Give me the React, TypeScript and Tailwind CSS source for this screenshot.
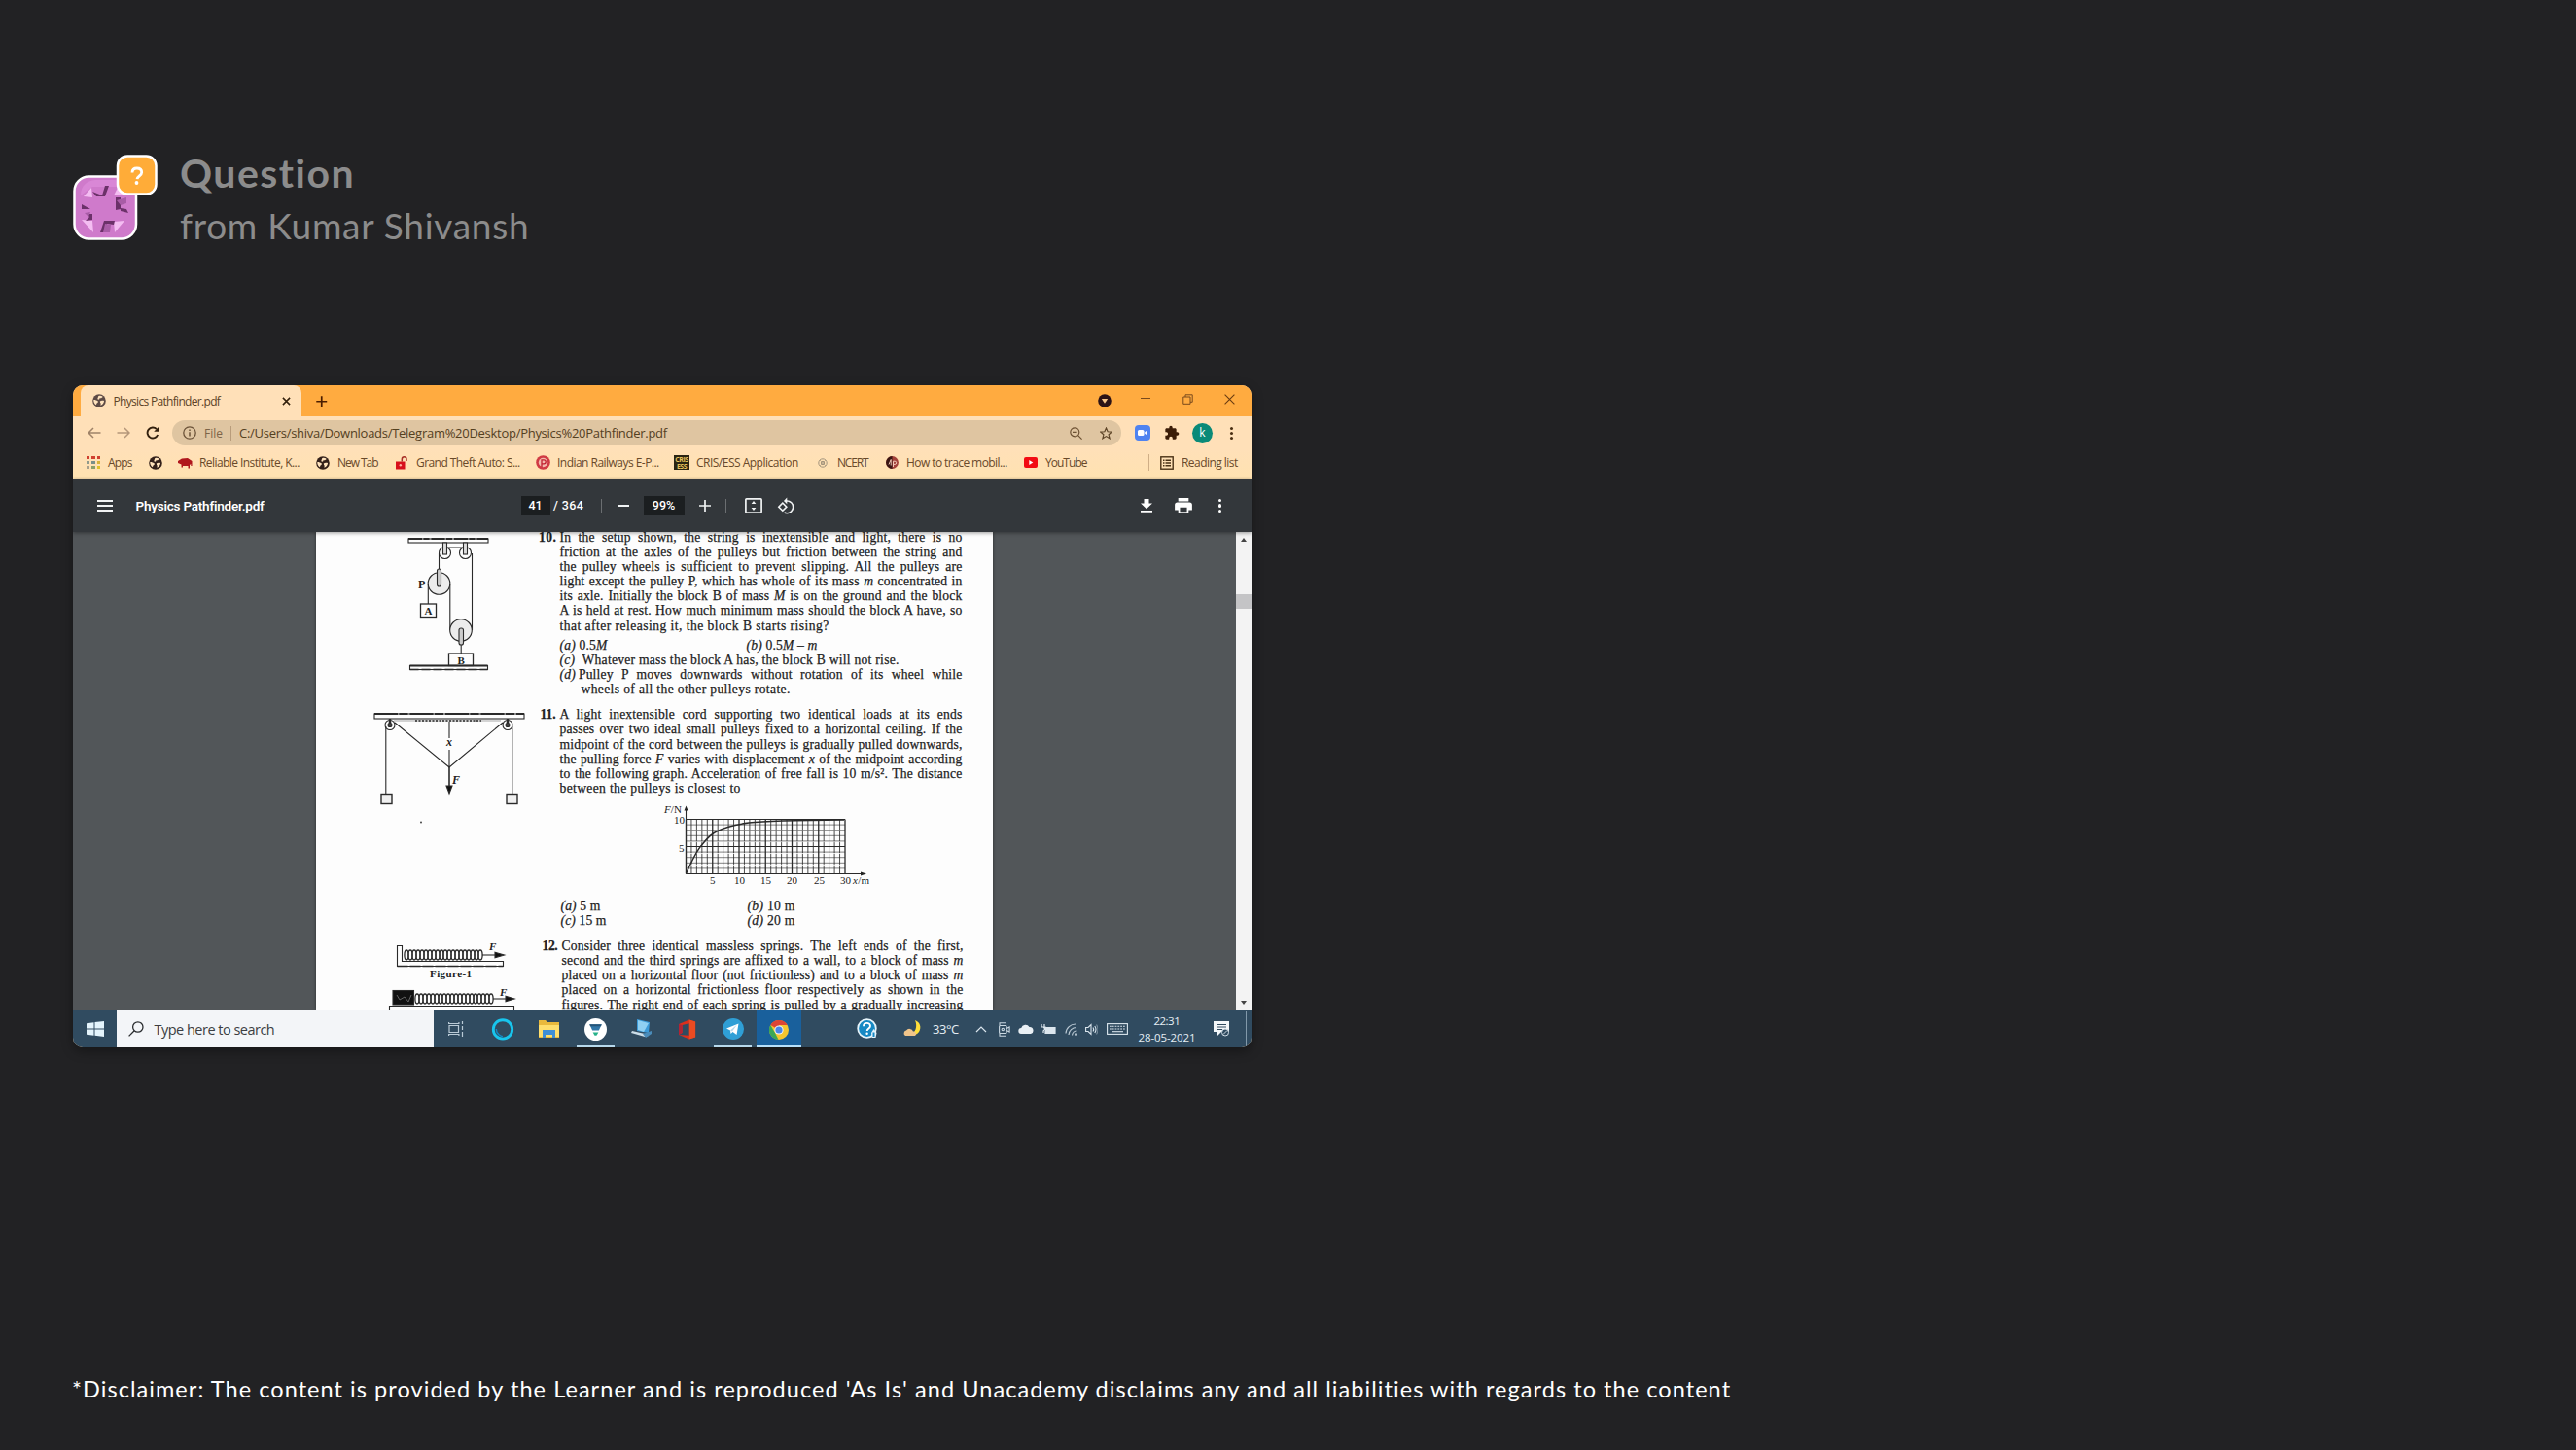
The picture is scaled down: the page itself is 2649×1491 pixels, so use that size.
import React, { useLayoutEffect, useRef } from "react";

/** One line of text whose tracking is set so that it fills the width of its box. */
function Fit({ className, children }: { className: string; children: React.ReactNode }) {
  const box = useRef<HTMLDivElement>(null);
  const line = useRef<HTMLSpanElement>(null);
  useLayoutEffect(() => {
    const b = box.current;
    const l = line.current;
    if (!b || !l) return;
    l.style.letterSpacing = "0px";
    const count = (l.textContent || "").length;
    const natural = l.getBoundingClientRect().width;
    l.style.letterSpacing = `${(b.clientWidth - natural) / Math.max(1, count - 0.5)}px`;
  }, []);
  return (
    <div ref={box} className={"shrink-0 whitespace-nowrap " + className}>
      <span ref={line} className="inline-block whitespace-pre">
        {children}
      </span>
    </div>
  );
}

/** A printed line stretched between both margins. */
function Line({ children }: { children: React.ReactNode }) {
  return <div className="h-[15.2px] w-full whitespace-nowrap tracking-[0.18px] [text-align-last:justify]">{children}</div>;
}

function Globe({ className, fill }: { className: string; fill: string }) {
  return (
    <svg viewBox="0 0 14 14" className={"size-[14px] shrink-0 " + className}>
      <circle cx="7" cy="7" r="6.8" fill={fill} />
      <path d="M1.300 6c1.500-.2 3 .5 4.200 1.300.9.700.3 1.600-.5 1.900-.9.300-.6 1.500-1.300 2C2.100 10 1.100 8 1.300 6zM6.200 2.200c1.500-.8 3.300-.3 4.600.8L9 4.300l-1.500-.1-.5 1.600-1.800-.5zM7.800 7.400c1.500-.9 3-.6 4.300-.3-.2 2.300-1.600 4-3.600 4.700-.2-1.200.7-2.200-.4-2.900z" fill="#ffe3bd" />
    </svg>
  );
}

function BrandMark() {
  return (
    <svg viewBox="0 0 88 90" className="h-[90px] w-[88px] shrink-0">
      <rect x="1.500" y="22.500" width="63.500" height="64" rx="15" fill="#cf7acb" stroke="#fff" strokeWidth="2.500" />
      <path d="M8 42c0-10 6-15 15-16h20c8 1 15 7 16 15l-12-8H20z" fill="#d987d6" />
      <path d="M19 34l1 10-9-1zM46 34l-4 8 12 0zM9 67l11 1 1 12zM53 68l-11 1 1 11z" fill="#f4bdf2" />
      <path d="M20 38l10 4 3-10h4l-4 11H24zM44 44h5l0 12-5 1zM49 55l6 1 2 4-8-2zM9 51l9 5-9 0zM14 61h6l0 6-7 1 4-4zM32 68l11 0-1 4-7-1-3 9h-4z" fill="#6b3169" />
      <path d="M33 71l6 1-1 8-7 0zM12 60l6-1-2 5zM45 47l10-3v6l-6 2z" fill="#a85ca6" />
      <rect x="46" y="1.500" width="39.500" height="39" rx="10" fill="#ffac38" stroke="#fff" strokeWidth="2.500" />
      <path d="M61 18.500c0-3 2-4.500 4.800-4.500 3 0 4.900 1.700 4.900 4.200 0 3.500-4.300 3.600-4.700 7" fill="none" stroke="#fff" strokeWidth="2.800" />
      <circle cx="65.500" cy="29" r="1.900" fill="#fff" />
    </svg>
  );
}

function TabStrip() {
  return (
    <div className="flex h-8 w-full bg-[#ffab40]">
      <div className="ml-2 flex h-8 w-[227px] items-center rounded-t-[8px] bg-[#ffe0b8]">
        <Globe className="ml-3" fill="#5d4a45" />
        <Fit className="ml-[7.500px] w-[110px] pt-px text-[12px] leading-4 text-[#5c4327]">Physics Pathfinder.pdf</Fit>
        <svg viewBox="0 0 10 10" className="ml-[63px] size-[9px] shrink-0" stroke="#33200c" strokeWidth="1.700">
          <path d="M1 1l8 8M9 1l-8 8" />
        </svg>
      </div>
      <svg viewBox="0 0 12 12" className="ml-[15px] mt-[10.500px] size-[11.500px] shrink-0" stroke="#4a1d00" strokeWidth="1.800">
        <path d="M6 .3v11.400M.3 6h11.400" />
      </svg>
      <div className="ml-auto flex h-8 w-[158px] items-start">
        <svg viewBox="0 0 14 14" className="mt-[9px] size-[14px]">
          <circle cx="7" cy="7" r="6.800" fill="#2b1216" />
          <path d="M3.800 5h6.400L7 9.800z" fill="#f5c58a" />
        </svg>
        <div className="ml-[30px] mt-[13px] h-px w-[10px] bg-[#7a4a1c]" />
        <svg viewBox="0 0 11 11" className="ml-[33px] mt-[8.500px] size-[11px]" fill="none" stroke="#7a4a1c">
          <path d="M.8 3h7.200v7.300H.8zM3 3V.8h7.200v7.500H8" />
        </svg>
        <svg viewBox="0 0 11 11" className="ml-[32px] mt-[8.500px] size-[11px]" stroke="#6b3d12" strokeWidth="1.100">
          <path d="M.6.6l9.800 9.800M10.400.6L.6 10.400" />
        </svg>
      </div>
    </div>
  );
}

function AddressRow() {
  return (
    <div className="flex h-[34px] w-full items-center">
      <svg viewBox="0 0 14 12" className="ml-[15px] h-[12px] w-[14px]" fill="none" stroke="#9f8368" strokeWidth="1.500">
        <path d="M13.500 6H1M6 1L1 6l5 5" />
      </svg>
      <svg viewBox="0 0 14 12" className="ml-[16px] h-[12px] w-[14px]" fill="none" stroke="#b5977a" strokeWidth="1.500">
        <path d="M.5 6H13M8 1l5 5-5 5" />
      </svg>
      <svg viewBox="0 0 14 14" className="ml-[16px] size-[14px]" fill="none" stroke="#33200e" strokeWidth="1.900">
        <path d="M12.200 9A5.500 5.500 0 1 1 11 3.100" />
        <path d="M13.500.4v5.300H8.200z" fill="#33200e" stroke="none" />
      </svg>
      <div className="ml-[13px] flex h-[26px] w-[976px] items-center rounded-full bg-[#dfc5a1]">
        <svg viewBox="0 0 14 14" className="ml-[11px] size-[14px]" fill="none" stroke="#6b5238" strokeWidth="1.300">
          <circle cx="7" cy="7" r="6.200" />
          <path d="M7 6.200v4.200M7 3.400v1.500" strokeWidth="1.500" />
        </svg>
        <Fit className="ml-[8px] w-[19px] pt-px text-[12px] text-[#7d6448]">File</Fit>
        <div className="ml-[8px] h-[15px] w-px bg-[#b89c7b]" />
        <Fit className="ml-[8px] w-[440px] pt-px text-[13px] text-[#54401f]">
          C:/Users/shiva/Downloads/Telegram%20Desktop/Physics%20Pathfinder.pdf
        </Fit>
        <svg viewBox="0 0 13 13" className="ml-auto size-[13px]" fill="none" stroke="#6e5234" strokeWidth="1.200">
          <circle cx="5.300" cy="5.300" r="4.500" />
          <path d="M8.600 8.600l4 4M3 5.300h4.600" />
        </svg>
        <svg viewBox="0 0 13 13" className="ml-[18px] mr-[9px] size-[13px]" fill="none" stroke="#5f4628" strokeWidth="1.200">
          <path d="M6.500 1l1.600 3.800 4.100.3-3.100 2.700 1 4-3.600-2.200-3.600 2.200 1-4L.8 5.100l4.100-.3z" />
        </svg>
      </div>
      <svg viewBox="0 0 16 16" className="ml-[14px] size-[16px]">
        <rect width="16" height="16" rx="4" fill="#4f83f0" />
        <rect x="3" y="5" width="6.500" height="6" rx="1.500" fill="#fff" />
        <path d="M10.200 7.200L13 5.300v5.400l-2.800-1.900z" fill="#fff" />
      </svg>
      <svg viewBox="0 0 24 24" className="ml-[14px] size-[16px]" fill="#3b1d08">
        <path d="M20.500 11H19V7c0-1.100-.9-2-2-2h-4V3.500a2.500 2.500 0 0 0-5 0V5H4c-1.100 0-2 .9-2 2v3.800h1.500a2.700 2.700 0 0 1 0 5.400H2V20c0 1.100.9 2 2 2h3.800v-1.500a2.700 2.700 0 0 1 5.400 0V22H17c1.100 0 2-.9 2-2v-4h1.500a2.500 2.500 0 0 0 0-5z" />
      </svg>
      <div className="ml-[13px] flex size-[21px] items-center justify-center rounded-full bg-[#0a8a78] text-[12px] leading-none text-white">k</div>
      <div className="ml-[17.500px] flex flex-col gap-[2px]">
        <div className="size-[3px] rounded-full bg-[#4a2e12]" />
        <div className="size-[3px] rounded-full bg-[#4a2e12]" />
        <div className="size-[3px] rounded-full bg-[#4a2e12]" />
      </div>
    </div>
  );
}

const appDots = ["#d0402f", "#d0402f", "#d0402f", "#8f9a8c", "#7a8f8a", "#d9b23a", "#a8a08c", "#8c9f6a", "#e0c22a"];

function Bookmarks() {
  return (
    <div className="flex h-[31px] w-full items-center bg-gradient-to-b from-[#ffe0b8] to-[#ffe2b0] pb-[3.500px] text-[12px] text-[#69492a]">
      <div className="ml-[14px] grid w-[14px] grid-cols-3 gap-[2px]">
        {appDots.map((c, i) => (
          <div key={i} className="h-[3px] w-[3.300px]" style={{ backgroundColor: c }} />
        ))}
      </div>
      <Fit className="ml-[8px] w-[25px]">Apps</Fit>
      <Globe className="ml-[17px]" fill="#33201a" />
      <svg viewBox="0 0 15 12" className="ml-[16px] h-[12px] w-[15px] shrink-0" fill="#b0171d">
        <path d="M0 4L4 1.500 10 1l4.500 3v5h-1.200V7L12 8v3.500h-1.500V9H5v1.500H3.500V7.500L0 6z" />
      </svg>
      <Fit className="ml-[7px] w-[103px]">Reliable Institute, K...</Fit>
      <Globe className="ml-[17px]" fill="#33201a" />
      <Fit className="ml-[8px] w-[42px]">New Tab</Fit>
      <svg viewBox="0 0 13 14" className="ml-[18px] h-[14px] w-[13px] shrink-0">
        <rect x="0" y="5.500" width="9.500" height="8" fill="#d8101c" />
        <path d="M6.300 5.500V3.200a2.300 2.300 0 0 1 4.700 0V5" fill="none" stroke="#a83028" strokeWidth="1.500" />
        <circle cx="4.800" cy="9.300" r="1.200" fill="#ffb0a0" />
      </svg>
      <Fit className="ml-[8px] w-[107px]">Grand Theft Auto: S...</Fit>
      <svg viewBox="0 0 15 15" className="ml-[16px] size-[15px] shrink-0">
        <circle cx="7.500" cy="7.500" r="7.300" fill="#d03a44" />
        <circle cx="7.500" cy="7.500" r="4.700" fill="#f3b8ac" />
        <path d="M6 12V4.800h2.200a1.900 1.900 0 0 1 0 4H6" fill="none" stroke="#c02030" strokeWidth="1.300" />
      </svg>
      <Fit className="ml-[7px] w-[105px]">Indian Railways E-P...</Fit>
      <div className="ml-[15px] flex h-[15px] w-[16px] shrink-0 flex-col items-center justify-center bg-[#2a2412] text-[7px] font-bold leading-[7px] tracking-[-0.500px] text-[#e8c25a]">
        <span>CRIS</span>
        <span>ESS</span>
      </div>
      <Fit className="ml-[7px] w-[105px]">CRIS/ESS Application</Fit>
      <svg viewBox="0 0 10 10" className="ml-[20px] size-[10px] shrink-0" fill="none" stroke="#a3947c">
        <circle cx="5" cy="5" r="4.200" />
        <circle cx="5" cy="5" r="1.700" />
        <path d="M2 2l6 6M8 2L2 8" strokeWidth=".6" />
      </svg>
      <Fit className="ml-[10px] w-[32px]">NCERT</Fit>
      <svg viewBox="0 0 13 13" className="ml-[18px] size-[13px] shrink-0">
        <circle cx="6.500" cy="6.500" r="6.400" fill="#a3413a" />
        <path d="M6.500.1a6.400 6.400 0 0 0 0 12.800z" fill="#3a1613" />
        <path d="M3 8.500l2.200-5v6M7.500 11V5.200h1.600a1.500 1.500 0 0 1 0 3.200H7.500" fill="none" stroke="#f3c8b8" />
      </svg>
      <Fit className="ml-[8px] w-[104px]">How to trace mobil...</Fit>
      <svg viewBox="0 0 14 11" className="ml-[17px] h-[11px] w-[14px] shrink-0">
        <rect width="14" height="11" rx="2" fill="#f20b14" />
        <path d="M5.300 3v5l4-2.500z" fill="#fff" />
      </svg>
      <Fit className="ml-[8px] w-[43px]">YouTube</Fit>
      <div className="ml-[63px] h-[17px] w-px bg-[#cfae86]" />
      <svg viewBox="0 0 14 14" className="ml-[11px] size-[14px] shrink-0" fill="none" stroke="#4a3216" strokeWidth="1.400">
        <rect x=".8" y=".8" width="12.400" height="12.400" />
        <path d="M3 4.200h1.500M5.500 4.200H11M3 7h1.500M5.500 7H11M3 9.800h1.500M5.500 9.800H11" />
      </svg>
      <Fit className="ml-[8px] w-[58px]">Reading list</Fit>
    </div>
  );
}

function PdfToolbar() {
  return (
    <div className="relative z-10 flex h-[54px] w-full items-center bg-[#33373b] font-['Roboto'] text-[13.500px] font-medium text-white shadow-[0_1px_4px_rgba(0,0,0,0.4)]">
      <svg viewBox="0 0 16 12" className="ml-[24.500px] h-[12px] w-[16px]" stroke="#f1f3f4" strokeWidth="2">
        <path d="M0 1h16M0 6h16M0 11h16" />
      </svg>
      <Fit className="ml-[24px] w-[132px] font-semibold">Physics Pathfinder.pdf</Fit>
      <div className="ml-[264px] flex h-[20px] w-[30px] items-center justify-center bg-[#1b1e20] text-[12.500px]">41</div>
      <Fit className="ml-[3.500px] w-[31px] text-[12.500px]">/ 364</Fit>
      <div className="ml-[18px] h-[14px] w-px bg-[#6b6e71]" />
      <div className="ml-[15.500px] h-[1.500px] w-[12px] bg-[#f1f3f4]" />
      <div className="ml-[15px] flex h-[20px] w-[42px] items-center justify-center bg-[#1b1e20] text-[12.500px]">99%</div>
      <svg viewBox="0 0 12 12" className="ml-[15.500px] size-[12px]" stroke="#f1f3f4" strokeWidth="1.700">
        <path d="M6 0v12M0 6h12" />
      </svg>
      <div className="ml-[15px] h-[14px] w-px bg-[#6b6e71]" />
      <svg viewBox="0 0 18 16" className="ml-[19px] h-[16px] w-[18px]" fill="none" stroke="#f1f3f4" strokeWidth="1.700">
        <rect x=".9" y=".9" width="16.200" height="14.200" rx=".8" />
        <path d="M9 3l2.400 3H6.600zM9 13l2.400-3H6.600z" fill="#f1f3f4" stroke="none" />
      </svg>
      <svg viewBox="0 0 24 24" className="ml-[15px] size-[19px]" fill="#f1f3f4">
        <path d="M7.340 6.410L.86 12.900l6.490 6.480 6.490-6.480-6.500-6.490zM3.690 12.900l3.660-3.660L11 12.900l-3.660 3.660-3.650-3.660zm15.670-6.260C17.610 4.880 15.300 4 13 4V.76L8.760 5 13 9.240V6c1.790 0 3.580.68 4.950 2.050a7.007 7.007 0 0 1 0 9.900 6.973 6.973 0 0 1-7.790 1.440l-1.490 1.490C10.020 21.620 11.510 22 13 22c2.300 0 4.610-.88 6.360-2.640a8.980 8.980 0 0 0 0-12.720z" />
      </svg>
      <svg viewBox="0 0 14 14" className="ml-auto size-[14px]" fill="#fff">
        <path d="M4.500 0h5v4.500H13L7 10.200 1 4.500h3.500zM1 12h12v1.800H1z" />
      </svg>
      <svg viewBox="0 0 20 18" className="ml-[22px] h-[16px] w-[18px]" fill="#fff">
        <path d="M17 5H3a3 3 0 0 0-3 3v6h4v4h12v-4h4V8a3 3 0 0 0-3-3zm-3 11H6v-5h8v5zM16 0H4v4h12V0z" />
      </svg>
      <div className="ml-[26.500px] mr-[31px] flex flex-col gap-[2px]">
        <div className="size-[3.300px] rounded-full bg-white" />
        <div className="size-[3.300px] rounded-full bg-white" />
        <div className="size-[3.300px] rounded-full bg-white" />
      </div>
    </div>
  );
}

const inkText = "fill-[#222] font-['Liberation_Serif'] text-[12px] font-bold";

function PulleyFigure() {
  return (
    <svg viewBox="0 0 86 140" className="ml-[92.500px] mt-[3.500px] h-[140px] w-[86px]" fill="none" stroke="#2a2a2a" strokeWidth="1.100">
      <rect x="2" y="3" width="82" height="4" />
      <path d="M2 3h82" strokeWidth="1.800" strokeDasharray="14 1.500 6 2" />
      <circle cx="39.500" cy="17.500" r="6" />
      <circle cx="60.500" cy="17.500" r="6" />
      <rect x="37.500" y="7" width="4" height="12" fill="#ddd" />
      <rect x="58.500" y="7" width="4" height="12" fill="#ddd" />
      <path d="M42 12h17M33.500 18v22M67.500 18v79" />
      <circle cx="33.500" cy="49" r="11.300" fill="#ececec" />
      <rect x="31.500" y="34" width="4" height="18" rx="2" fill="#ccc" />
      <path d="M22.300 49v21M44.800 49v48" />
      <rect x="14.500" y="70" width="16" height="13.500" strokeWidth="1.300" />
      <circle cx="56" cy="97" r="11.300" fill="#ececec" />
      <rect x="54" y="95" width="4.500" height="17" rx="2" fill="#ccc" />
      <path d="M56.200 112v9" />
      <rect x="43.500" y="121" width="25" height="12.500" strokeWidth="1.300" />
      <rect x="3.500" y="133.500" width="80" height="4" />
      <path d="M3.500 133.500h80" strokeWidth="1.800" />
      <path d="M3.500 137.500h80" strokeDasharray="9 3" strokeWidth="1.500" />
      <g stroke="none" className={inkText}>
        <text x="12" y="54">P</text>
        <text x="18.500" y="81" className="text-[11px]">A</text>
        <text x="52.500" y="132" className="text-[11px]">B</text>
      </g>
    </svg>
  );
}

function CordFigure() {
  return (
    <svg viewBox="0 0 158 100" className="ml-[58px] mt-[39.500px] h-[100px] w-[158px] overflow-visible" fill="none" stroke="#2a2a2a" strokeWidth="1.100">
      <rect x="2" y="4" width="154" height="5" />
      <path d="M2 4h154" strokeWidth="1.800" strokeDasharray="24 1.500 9 2" />
      <path d="M22 11h110" stroke="#aaa" />
      <path d="M44 11h68" strokeWidth="1.600" strokeDasharray="2 1.500" />
      <circle cx="18" cy="15.500" r="5" />
      <circle cx="139" cy="15.500" r="5" />
      <circle cx="18" cy="15.500" r="2" fill="#444" />
      <circle cx="139" cy="15.500" r="2" fill="#444" />
      <path d="M18 9v5M139 9v5" strokeWidth="2.500" />
      <path d="M23 13l56 46 55-46M13.800 17v69M143.800 17v69M79 12v17M79 41v18" />
      <path d="M79 59v22" strokeWidth="1.600" />
      <path d="M76 78h6l-3 8z" fill="#111" />
      <rect x="9" y="86.500" width="11" height="10" fill="#f0f0f0" strokeWidth="1.400" />
      <rect x="138" y="86.500" width="11" height="10" fill="#f0f0f0" strokeWidth="1.400" />
      <circle cx="50" cy="115.500" r=".9" fill="#333" stroke="none" />
      <g stroke="none" className="fill-[#222] font-['Liberation_Serif'] text-[12px] font-bold italic">
        <text x="76" y="37">x</text>
        <text x="82" y="76">F</text>
      </g>
    </svg>
  );
}

const coil = (x: number, y: number, n: number, step: number) =>
  Array.from({ length: n }, (_, i) => <ellipse key={i} cx={x + i * step} cy={y} rx="2.100" ry="5" />);

function SpringFigures() {
  return (
    <svg viewBox="0 0 140 72" className="ml-[70px] mt-[138px] h-[72px] w-[140px]" fill="none" stroke="#2a2a2a" strokeWidth="1.100">
      <path d="M13.500 4.500h5v16h104v5H13.500z" />
      <path d="M13.500 25.500h109" strokeDasharray="11 2" strokeWidth="1.600" />
      <g strokeWidth="1.300">{coil(23, 14, 20, 4)}</g>
      <path d="M101 14h14" />
      <path d="M114 11.300l9.500 2.700-9.500 2.700z" fill="#111" />
      <rect x="9" y="50.500" width="21.500" height="14.500" fill="#111" />
      <path d="M13 55l3 5 5-3 4 5 3-7" stroke="#777" strokeWidth=".8" />
      <g strokeWidth="1.300">{coil(34, 59, 20, 4)}</g>
      <path d="M112 59h14" />
      <path d="M125 56.300l9 2.700-9 2.700z" fill="#111" />
      <path d="M5.500 72v-5.500h128V72" />
      <g stroke="none" className="fill-[#222] font-['Liberation_Serif'] text-[11px] font-bold">
        <text x="108" y="9" className="italic">F</text>
        <text x="119" y="56" className="italic">F</text>
        <text x="47" y="37" textLength="43">Figure-1</text>
      </g>
    </svg>
  );
}

const verticals = Array.from({ length: 31 }, (_, i) => i);
const horizontals = Array.from({ length: 11 }, (_, i) => i);

function ForceGraph() {
  return (
    <svg viewBox="0 0 220 90" className="ml-[104px] h-[90px] w-[220px] shrink-0" fill="none" stroke="#2a2a2a">
      {verticals.map((i) => (
        <path key={i} d={`M${25.500 + i * 5.450} 18.500v56`} strokeWidth={i % 5 === 0 ? 1.300 : 0.850} strokeDasharray={i % 5 === 0 ? undefined : "11 .8"} />
      ))}
      {horizontals.map((i) => (
        <path key={i} d={`M25.500 ${18.500 + i * 5.600}h163.500`} strokeWidth={i % 5 === 0 ? 1.200 : 0.600} />
      ))}
      <path d="M25.500 74.500V8M189 74.500h18" strokeWidth="1.100" />
      <path d="M23.500 9.500l2-5 2 5zM205 72.500l6 2-6 2z" fill="#222" stroke="none" />
      <path d="M25.500 74.500C31 62 36 51 42 44.500 47 38 52 33 58 30.500 66 26.500 76 24 90 22c18-2 40-2.500 98-3" strokeWidth="1.400" />
      <g stroke="none" className="fill-[#1c1c1c] font-['Liberation_Serif'] text-[11px] [-webkit-text-stroke:0.250px_#1e1e1e]">
        <text x="3" y="12" textLength="18"><tspan className="italic">F</tspan>/N</text>
        <text x="13" y="23">10</text>
        <text x="18" y="52">5</text>
        <text x="50" y="85">5</text>
        <text x="75" y="85">10</text>
        <text x="102" y="85">15</text>
        <text x="129" y="85">20</text>
        <text x="157" y="85">25</text>
        <text x="184" y="85">30</text>
        <text x="197" y="85" textLength="17"><tspan className="italic">x</tspan>/m</text>
      </g>
    </svg>
  );
}

function PdfPage() {
  return (
    <div className="flex h-[492px] w-[696px] overflow-hidden bg-[#fdfdfd] shadow-[0_0_3px_rgba(0,0,0,0.5)]">
      <div className="h-full w-[229px] shrink-0">
        <PulleyFigure />
        <CordFigure />
        <SpringFigures />
      </div>
      <div className="-mt-[2.500px] w-[437px] shrink-0 font-['Liberation_Serif'] text-[13.600px] leading-[15.200px] text-[#1e1e1e] [-webkit-text-stroke:0.250px_#1e1e1e]">
        <div className="flex">
          <Fit className="w-[18px] font-bold">10.</Fit>
          <div className="ml-[3.500px] w-[414px]">
            <Line>In the setup shown, the string is inextensible and light, there is no</Line>
            <Line>friction at the axles of the pulleys but friction between the string and</Line>
            <Line>the pulley wheels is sufficient to prevent slipping. All the pulleys are</Line>
            <Line>light except the pulley P, which has whole of its mass <i>m</i> concentrated in</Line>
            <Line>its axle. Initially the block B of mass <i>M</i> is on the ground and the block</Line>
            <Line>A is held at rest. How much minimum mass should the block A have, so</Line>
            <Fit className="h-[20px] w-[277px]">that after releasing it, the block B starts rising?</Fit>
            <div className="flex">
              <Fit className="w-[49px]"><i>(a)</i> 0.5<i>M</i></Fit>
              <Fit className="ml-[143px] w-[73px]"><i>(b)</i> 0.5<i>M</i> – <i>m</i></Fit>
            </div>
            <Fit className="w-[349px]"><i>(c)</i>  Whatever mass the block A has, the block B will not rise.</Fit>
            <Line><i>(d)</i><span className="ml-[3px]">Pulley</span> P moves downwards without rotation of its wheel while</Line>
            <Fit className="ml-[22px] h-[26px] w-[215px]">wheels of all the other pulleys rotate.</Fit>
          </div>
        </div>
        <div className="ml-[1.500px] flex">
          <Fit className="w-[16px] font-bold">11.</Fit>
          <div className="ml-[4px] w-[414px]">
            <Line>A light inextensible cord supporting two identical loads at its ends</Line>
            <Line>passes over two ideal small pulleys fixed to a horizontal ceiling. If the</Line>
            <Line>midpoint of the cord between the pulleys is gradually pulled downwards,</Line>
            <Line>the pulling force <i>F</i> varies with displacement <i>x</i> of the midpoint according</Line>
            <Line>to the following graph. Acceleration of free fall is 10 m/s². The distance</Line>
            <Fit className="h-[19px] w-[186px]">between the pulleys is closest to</Fit>
            <div className="h-[101.500px] pt-[2px]">
              <ForceGraph />
            </div>
            <div className="flex">
              <Fit className="ml-[1px] w-[41px]"><i>(a)</i> 5 m</Fit>
              <Fit className="ml-[151px] w-[49px]"><i>(b)</i> 10 m</Fit>
            </div>
            <div className="flex h-[26px]">
              <Fit className="ml-[1px] w-[47px]"><i>(c)</i> 15 m</Fit>
              <Fit className="ml-[145px] w-[49px]"><i>(d)</i> 20 m</Fit>
            </div>
          </div>
        </div>
        <div className="ml-[3.500px] flex">
          <Fit className="w-[16px] font-bold">12.</Fit>
          <div className="ml-[4px] w-[413px]">
            <Line>Consider three identical massless springs. The left ends of the first,</Line>
            <Line>second and the third springs are affixed to a wall, to a block of mass <i>m</i></Line>
            <Line>placed on a horizontal floor (not frictionless) and to a block of mass <i>m</i></Line>
            <Line>placed on a horizontal frictionless floor respectively as shown in the</Line>
            <Line>figures. The right end of each spring is pulled by a gradually increasing</Line>
          </div>
        </div>
      </div>
    </div>
  );
}

function Viewer() {
  return (
    <div className="flex h-[492px] w-full overflow-hidden bg-[#525659]">
      <div className="ml-[250px]">
        <PdfPage />
      </div>
      <div className="ml-auto flex h-full w-[16px] flex-col items-center bg-[#f3f3f3]">
        <svg viewBox="0 0 6 4" className="mt-[6px] h-[4px] w-[6px]" fill="#444"><path d="M0 4l3-4 3 4z" /></svg>
        <div className="mt-[54px] h-[15px] w-[16px] bg-[#c4c4c6]" />
        <svg viewBox="0 0 6 4" className="mb-[6px] mt-auto h-[4px] w-[6px]" fill="#444"><path d="M0 0h6L3 4z" /></svg>
      </div>
    </div>
  );
}

function Taskbar() {
  return (
    <div className="flex h-[38px] w-full items-center bg-[#304b60] text-[#e6eef4]">
      <svg viewBox="0 0 18 16" className="ml-[14px] h-[16px] w-[18px]" fill="#e4f4fc">
        <path d="M0 2.200L7.500 1.200v6.300H0zM8.500 1L18 0v7.500H8.500zM0 8.500h7.500v6.300L0 13.800zM8.500 8.500H18V16l-9.500-1.200z" />
      </svg>
      <div className="ml-[13px] flex h-[38px] w-[326px] items-center bg-[#f3f5f8]">
        <svg viewBox="0 0 16 16" className="ml-[12px] size-[16px]" fill="none" stroke="#2a2d30" strokeWidth="1.300">
          <circle cx="9.800" cy="6" r="5.200" />
          <path d="M6.200 9.800L.6 15.400" />
        </svg>
        <Fit className="ml-[10.500px] w-[124px] pt-[2px] text-[14.500px] text-[#3b3e42]">Type here to search</Fit>
      </div>
      <svg viewBox="0 0 16 16" className="ml-[15px] size-[16px]" fill="none" stroke="#b9cad6" strokeWidth="1.200">
        <path d="M1 4.500h9.500v7H1zM.6 1v1.500h10.300V1M.6 15v-1.500h10.300V15M14.500 0v3M14.500 5v4M14.500 11v5" />
      </svg>
      <svg viewBox="0 0 24 24" className="ml-[28px] h-[23px] w-[24px]" fill="none" stroke="#18c5ee" strokeWidth="3">
        <path d="M12 1.800a10 10 0 1 0 0 20.200 10 10 0 0 0 0-20.200z" />
        <path d="M12 19.500c-2 0-7-2.500-7-8" stroke="#1489c4" strokeWidth="1.500" />
      </svg>
      <svg viewBox="0 0 21 18" className="ml-[25px] h-[18px] w-[21px]">
        <path d="M0 0h7l2 2h12v16H0z" fill="#e9b93c" />
        <path d="M0 5h21v12H0z" fill="#ffdf6d" />
        <path d="M4 10h13v8h-3v-3H7v3H4z" fill="#3f8fd6" />
      </svg>
      <div className="ml-[18px] flex h-full w-[39px] flex-col items-center">
        <svg viewBox="0 0 24 24" className="mt-[7.500px] size-[23px]">
          <circle cx="12" cy="12" r="12" fill="#fff" />
          <path d="M5.500 6.500h13L15.500 13h-7z" fill="#3277a8" />
          <path d="M5.500 6.500h13l-.8 2H6.300z" fill="#265477" />
          <path d="M9 15h6l-2 3.500h-2z" fill="#27b28a" />
        </svg>
        <div className="mt-auto h-[2px] w-full bg-[#b7d9ec]" />
      </div>
      <svg viewBox="0 0 22 20" className="ml-[17px] h-[20px] w-[22px]">
        <path d="M6 0l13 3-1 11-12-2z" fill="#3c9bd9" />
        <path d="M7 1l11 3-5 9-6-2z" fill="#8fd0f2" />
        <path d="M1 12l13 3 4 2-4 1L0 14z" fill="#cbdde8" />
        <path d="M12 15l9-3v3l-6 4z" fill="#4a8cba" />
      </svg>
      <svg viewBox="0 0 20 22" className="ml-[27px] h-[21px] w-[18px]">
        <path d="M0 5l12-5 7 2v18l-7 2L0 17l12 1V4L4 6v9l-4 2z" fill="#dc2f1c" />
        <path d="M12 0l7 2v18l-7 2z" fill="#ea4b22" />
        <path d="M0 5l4 1v9l-4 2z" fill="#b32335" />
      </svg>
      <div className="ml-[18px] flex h-full w-[39px] flex-col items-center">
        <svg viewBox="0 0 22 22" className="mt-[8px] size-[22px]">
          <circle cx="11" cy="11" r="11" fill="#2f9fd6" />
          <path d="M4 10.500L16.500 5.500 14.500 17l-4-3-2 2-.5-3.500z" fill="#fff" />
          <path d="M8 12.500l7-6-5 7z" fill="#b5d8ea" />
        </svg>
        <div className="mt-auto h-[2px] w-full bg-[#b7d9ec]" />
      </div>
      <div className="ml-[5px] flex h-full w-[46px] flex-col items-center bg-[#19609c]">
        <svg viewBox="0 0 20 20" className="mt-[9.500px] size-[20px]">
          <circle cx="10" cy="10" r="10" fill="#f6c62f" />
          <path d="M10 10L1.300 5a10 10 0 0 1 17.400 0H10z" fill="#dd4535" />
          <path d="M1.300 5L6 13l3.500 7A10 10 0 0 1 1.300 5z" fill="#3aa757" />
          <circle cx="10" cy="10" r="4.600" fill="#f2f6fa" />
          <circle cx="10" cy="10" r="3.600" fill="#4a86e8" />
        </svg>
        <div className="mt-auto h-[2px] w-full bg-[#b7e0fa]" />
      </div>
      <svg viewBox="0 0 22 22" className="ml-[57px] size-[22px]">
        <circle cx="10.500" cy="10.500" r="9.300" fill="#1789c4" stroke="#e6f4fb" strokeWidth="1.800" />
        <path d="M7 8.300c0-2.200 1.600-3.400 3.500-3.400s3.500 1.200 3.500 3.100c0 2.500-3.300 2.500-3.300 5" fill="none" stroke="#fff" strokeWidth="1.900" />
        <circle cx="10.600" cy="15.700" r="1.200" fill="#fff" />
        <path d="M15 15l2.500-4 3 4-1 5h-4z" fill="#e6f4fb" />
        <path d="M16.500 14.500h2V19h-2z" fill="#1789c4" />
      </svg>
      <svg viewBox="0 0 20 18" className="ml-[26px] h-[18px] w-[20px]">
        <path d="M12 0c5 2 7 7 4 12-2 3-6 4-9 3 5-2 8-8 5-15z" fill="#ffdf3a" />
        <path d="M2 16a3 3 0 0 1 1-5.500 4 4 0 0 1 7 1 2.500 2.500 0 0 1 2 4.500z" fill="#f0c48a" />
      </svg>
      <Fit className="ml-[10px] w-[27px] pt-[2px] text-[13px]">33°C</Fit>
      <svg viewBox="0 0 12 7" className="ml-[17px] h-[7px] w-[12px]" fill="none" stroke="#dbe6ee" strokeWidth="1.200"><path d="M1 6l5-5 5 5" /></svg>
      <svg viewBox="0 0 12 15" className="ml-[12px] h-[15px] w-[12px]" fill="none" stroke="#c9d7e1" strokeWidth="1.100">
        <rect x=".6" y="3.500" width="7.500" height="8" rx="1" />
        <path d="M8.100 6.500l3-1.500v5l-3-1.500M1 3.500V.8h7M1 11.500v2.700h7" />
        <circle cx="4.300" cy="7.500" r="1.200" />
      </svg>
      <svg viewBox="0 0 16 10" className="ml-[8px] h-[10px] w-[16px]" fill="#e9eff4">
        <path d="M3.500 10a3 3 0 0 1-.3-6A4.500 4.500 0 0 1 11.500 3 3.600 3.600 0 0 1 13 10z" />
      </svg>
      <svg viewBox="0 0 16 11" className="ml-[7px] h-[11px] w-[16px]">
        <path d="M3 3.500h12v6H5V7" fill="#dce6ee" stroke="#dce6ee" strokeWidth="1.200" />
        <path d="M1 0v3M4 0v3M0 3h5v2l-2 2v2" fill="none" stroke="#dce6ee" strokeWidth="1.200" />
      </svg>
      <svg viewBox="0 0 13 13" className="ml-[9px] size-[13px]" fill="none" stroke="#b9c8d3" strokeWidth="1.200">
        <path d="M1 10.500A10 10 0 0 1 11.500 1M4 12a8 8 0 0 1 8-7.500M7.500 12.500A5 5 0 0 1 12.500 8" />
        <circle cx="11.500" cy="11.500" r=".9" />
      </svg>
      <svg viewBox="0 0 13 13" className="ml-[8px] size-[13px]" fill="none" stroke="#dbe6ee" strokeWidth="1.100">
        <path d="M.6 4.500h2.400L6 1.500v10L3 8.500H.6zM8 4.500q1.300 2 0 4M9.800 3q2.400 3.500 0 7" />
        <path d="M11.500 1.500q3 5 0 10" opacity=".4" />
      </svg>
      <svg viewBox="0 0 22 12" className="ml-[9px] h-[12px] w-[22px]" fill="none" stroke="#dbe6ee" strokeWidth="1.100">
        <rect x=".6" y=".6" width="20.800" height="10.800" />
        <path d="M3 3.300h16M3 6h16" strokeDasharray="1.800 1" />
        <path d="M5 8.700h12" />
      </svg>
      <div className="ml-[10px] flex w-[60px] flex-col items-center text-[11.500px] leading-[17.500px]">
        <Fit className="w-[27px]">22:31</Fit>
        <Fit className="w-[59px]">28-05-2021</Fit>
      </div>
      <svg viewBox="0 0 16 16" className="ml-[18px] size-[16px]">
        <path d="M0 0h16v11h-8l-4 4v-4H0z" fill="#f3f7fa" />
        <path d="M3 3.500h10M3 6h10M3 8.500h6" stroke="#304b60" strokeWidth="1" />
        <circle cx="12" cy="11.500" r="3.500" fill="#304b60" stroke="#cfdbe4" />
        <path d="M10 13.500l4-4" stroke="#cfdbe4" />
      </svg>
      <div className="ml-[17px] h-[36px] w-px bg-[#8299aa]" />
    </div>
  );
}

export default function App() {
  return (
    <div className="flex h-[1491px] w-[2649px] flex-col overflow-hidden bg-[#222224] pl-[75px] font-['Open_Sans',sans-serif]">
      <header className="mt-[159px] flex h-[112px] font-['Lato'] text-[#8c8c8c]">
        <BrandMark />
        <div className="-mt-[5.500px] ml-[22px]">
          <Fit className="w-[180px] text-[41px] font-bold leading-[48px]">Question</Fit>
          <Fit className="mt-[8px] w-[359px] text-[37px] leading-[44px]">from Kumar Shivansh</Fit>
        </div>
      </header>
      <main className="mt-[125px] h-[681px] w-[1212px] overflow-hidden rounded-[10px] bg-[#ffe0b8] shadow-[0_4px_12px_rgba(0,0,0,0.35)]">
        <TabStrip />
        <AddressRow />
        <Bookmarks />
        <PdfToolbar />
        <Viewer />
        <Taskbar />
      </main>
      <footer className="mt-[336px] font-['Lato'] text-white">
        <Fit className="-ml-px w-[1706px] text-[23.500px] leading-[30px]">
          *Disclaimer: The content is provided by the Learner and is reproduced 'As Is' and Unacademy disclaims any and all liabilities with regards to the content
        </Fit>
      </footer>
    </div>
  );
}
